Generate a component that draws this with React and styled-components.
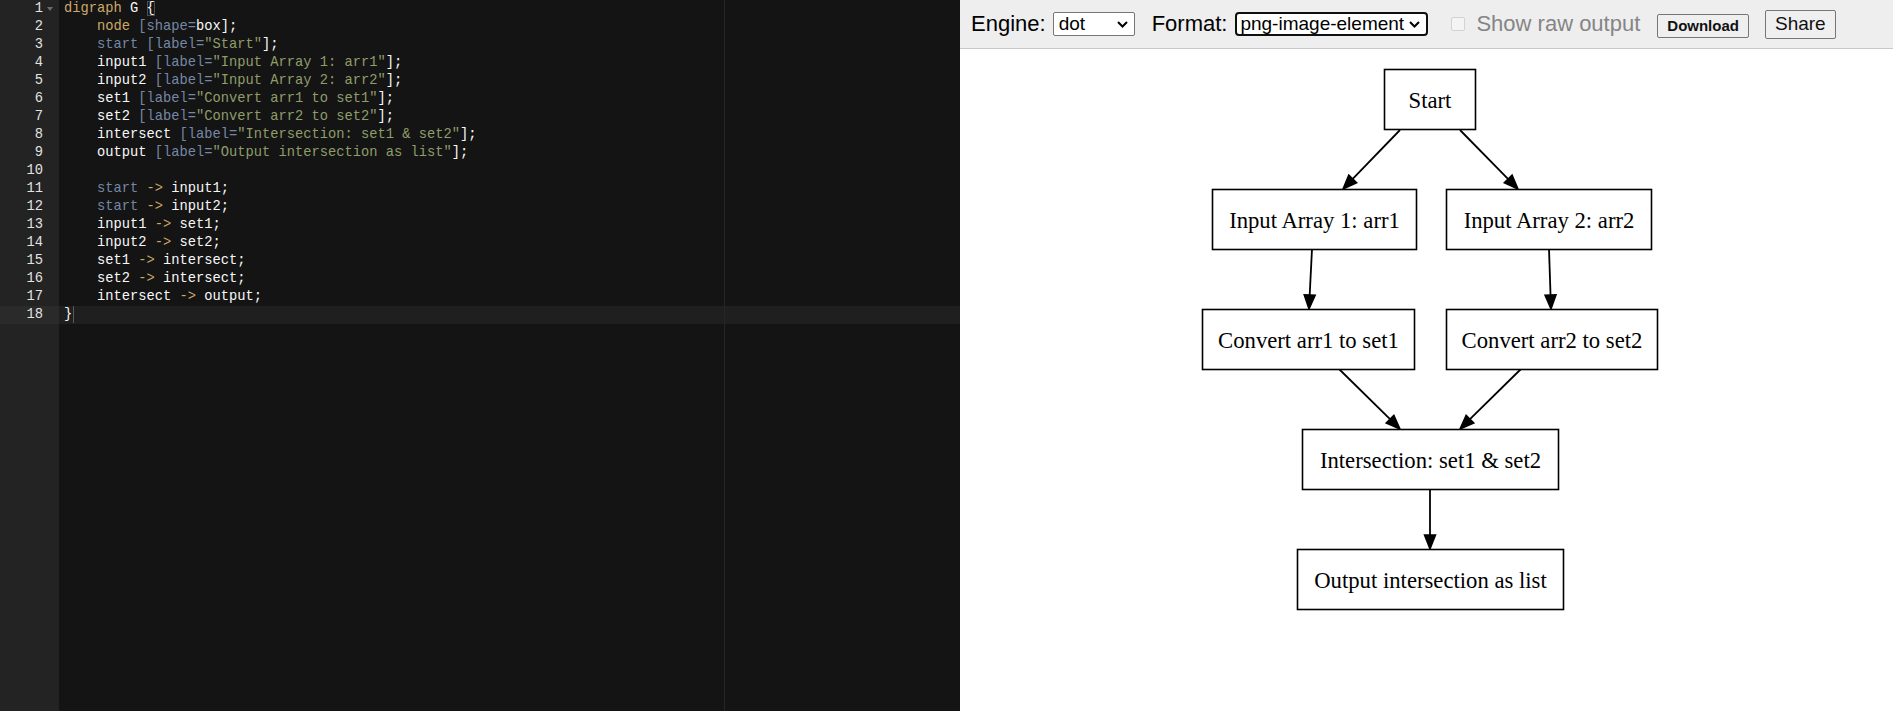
import React from 'react';
import styled, { createGlobalStyle } from 'styled-components';

const GlobalStyle = createGlobalStyle`
  html, body {
    margin: 0;
    padding: 0;
    height: 100%;
    overflow: hidden;
  }
  #root {
    height: 100%;
  }
`;

const Page = styled.div`
  display: flex;
  height: 100vh;
  width: 100vw;
`;

/* ---------- editor ---------- */

const Editor = styled.div`
  width: 960px;
  flex-shrink: 0;
  display: flex;
  background: #141414;
  font-family: 'Liberation Mono', 'DejaVu Sans Mono', monospace;
  font-size: 13.75px;
  line-height: 18px;
  color: #f8f8f8;
`;

const Gutter = styled.div`
  width: 59px;
  flex-shrink: 0;
  background: #232323;
  color: #e2e2e2;
`;

const LineNo = styled.div`
  position: relative;
  height: 18px;
  padding-right: 16px;
  text-align: right;
  background: ${(p) => (p.$active ? '#2a2a2a' : 'transparent')};
`;

const FoldWidget = styled.span`
  position: absolute;
  left: 47px;
  top: 7px;
  width: 0;
  height: 0;
  border-left: 3.5px solid transparent;
  border-right: 3.5px solid transparent;
  border-top: 4px solid #6b6b6b;
`;

const CodeArea = styled.div`
  flex: 1;
  position: relative;
`;

const PrintMargin = styled.div`
  position: absolute;
  top: 0;
  bottom: 0;
  left: 665px;
  width: 1px;
  background: #262626;
`;

const CodeLine = styled.div`
  height: 18px;
  padding-left: 5px;
  white-space: pre;
  background: ${(p) => (p.$active ? '#1f1f1f' : 'transparent')};
`;

const tokenColors = {
  k: '#cda869',
  a: '#7587a6',
  s: '#8f9d6a',
  p: '#f8f8f8',
};

const Tok = styled.span`
  color: ${(p) => tokenColors[p.$kind]};
`;

const Brace = styled.span`
  color: #f8f8f8;
  outline: 1px solid rgba(255, 255, 255, 0.25);
  outline-offset: -1px;
`;

const Cursor = styled.span`
  display: inline-block;
  width: 1px;
  height: 17px;
  margin-left: 1px;
  vertical-align: top;
  background: #5a5a5a;
`;

const attrLine = (name, label) => [
  ['p', '    '],
  name === 'start' ? ['a', name] : ['p', name],
  ['p', ' '],
  ['a', '[label='],
  ['s', `"${label}"`],
  ['p', '];'],
];

const edgeLine = (from, to) => [
  ['p', '    '],
  from === 'start' ? ['a', from] : ['p', from],
  ['k', ' -> '],
  ['p', `${to};`],
];

const codeLines = [
  [['k', 'digraph'], ['p', ' G '], ['brace', '{']],
  [['p', '    '], ['k', 'node'], ['a', ' [shape='], ['p', 'box];']],
  attrLine('start', 'Start'),
  attrLine('input1', 'Input Array 1: arr1'),
  attrLine('input2', 'Input Array 2: arr2'),
  attrLine('set1', 'Convert arr1 to set1'),
  attrLine('set2', 'Convert arr2 to set2'),
  attrLine('intersect', 'Intersection: set1 & set2'),
  attrLine('output', 'Output intersection as list'),
  [],
  edgeLine('start', 'input1'),
  edgeLine('start', 'input2'),
  edgeLine('input1', 'set1'),
  edgeLine('input2', 'set2'),
  edgeLine('set1', 'intersect'),
  edgeLine('set2', 'intersect'),
  edgeLine('intersect', 'output'),
  [['p', '}'], ['cursor', '']],
];

const ACTIVE_LINE = 17;

const CodeEditor = () => (
  <Editor>
    <Gutter>
      {codeLines.map((_, i) => (
        <LineNo key={i} $active={i === ACTIVE_LINE}>
          {i + 1}
          {i === 0 && <FoldWidget />}
        </LineNo>
      ))}
    </Gutter>
    <CodeArea>
      <PrintMargin />
      {codeLines.map((tokens, i) => (
        <CodeLine key={i} $active={i === ACTIVE_LINE}>
          {tokens.map(([kind, text], j) => {
            if (kind === 'brace') return <Brace key={j}>{text}</Brace>;
            if (kind === 'cursor') return <Cursor key={j} />;
            return (
              <Tok key={j} $kind={kind}>
                {text}
              </Tok>
            );
          })}
        </CodeLine>
      ))}
    </CodeArea>
  </Editor>
);

/* ---------- toolbar ---------- */

const Viewer = styled.div`
  flex: 1;
  display: flex;
  flex-direction: column;
  background: #ffffff;
  font-family: 'Liberation Sans', Arial, sans-serif;
`;

const Toolbar = styled.div`
  height: 48px;
  flex-shrink: 0;
  display: flex;
  align-items: center;
  padding-left: 11px;
  background: #eeeeee;
  border-bottom: 1px solid #c9c9c9;
  font-size: 22px;
  color: #000;
`;

const FieldLabel = styled.span`
  margin-right: ${(p) => p.$gap}px;
  color: ${(p) => (p.$disabled ? '#858585' : '#000')};
`;

const SelectWrap = styled.span`
  position: relative;
  display: inline-flex;
  margin-right: ${(p) => p.$gap}px;
`;

const SelectBox = styled.select`
  appearance: none;
  -webkit-appearance: none;
  width: ${(p) => p.$width}px;
  height: 24px;
  box-sizing: border-box;
  padding: 0 0 0 ${(p) => (p.$focused ? 3 : 5)}px;
  font-family: 'Liberation Sans', Arial, sans-serif;
  font-size: 19px;
  line-height: 20px;
  color: #000;
  background: #fff;
  border: ${(p) => (p.$focused ? '2px solid #101010' : '1px solid #767676')};
  border-radius: ${(p) => (p.$focused ? 4 : 2)}px;
  outline: none;
`;

const Chevron = styled.svg`
  position: absolute;
  right: ${(p) => p.$right}px;
  top: 9px;
  pointer-events: none;
`;

const Select = ({ value, width, focused, gap, chevronRight }) => (
  <SelectWrap $gap={gap}>
    <SelectBox $width={width} $focused={focused} defaultValue={value}>
      <option value={value}>{value}</option>
    </SelectBox>
    <Chevron $right={chevronRight} width="11" height="7" viewBox="0 0 11 7">
      <polyline
        points="1,1 5.5,5.5 10,1"
        fill="none"
        stroke="#000"
        strokeWidth="2"
      />
    </Chevron>
  </SelectWrap>
);

const CheckBox = styled.input`
  appearance: none;
  -webkit-appearance: none;
  width: 14px;
  height: 14px;
  margin: 0 11px 0 0;
  box-sizing: border-box;
  border: 1px solid #d2d2d2;
  border-radius: 2px;
  background: #f4f4f4;
`;

const Button = styled.button`
  box-sizing: border-box;
  height: ${(p) => (p.$small ? 24 : 29)}px;
  margin: ${(p) => (p.$small ? '3px 16px 0 0' : '0')};
  padding: 0 9px;
  font-family: 'Liberation Sans', Arial, sans-serif;
  font-size: ${(p) => (p.$small ? 15 : 19)}px;
  font-weight: ${(p) => (p.$small ? 700 : 400)};
  color: #111;
  background: #efefef;
  border: 1px solid #767676;
  border-radius: 2px;
`;

/* ---------- graph ---------- */

const GraphArea = styled.div`
  flex: 1;
  display: flex;
  justify-content: center;
  padding-top: 10px;
`;

const Graph = styled.svg`
  display: block;
  font-family: 'Liberation Serif', 'Times New Roman', serif;
`;

const nodes = [
  { id: 'start', label: 'Start', x: 198, y: 10, w: 91 },
  { id: 'input1', label: 'Input Array 1: arr1', x: 26, y: 130, w: 204 },
  { id: 'input2', label: 'Input Array 2: arr2', x: 260, y: 130, w: 205 },
  { id: 'set1', label: 'Convert arr1 to set1', x: 16, y: 250, w: 212 },
  { id: 'set2', label: 'Convert arr2 to set2', x: 260, y: 250, w: 211 },
  { id: 'inter', label: 'Intersection: set1 & set2', x: 116, y: 370, w: 256 },
  { id: 'output', label: 'Output intersection as list', x: 111, y: 490, w: 266 },
];

const NODE_H = 60;

const edges = [
  [214, 71, 157, 130],
  [274, 71, 332, 130],
  [126, 190, 123, 250],
  [363, 190, 365, 250],
  [153, 310, 214, 370],
  [335, 310, 274, 370],
  [244, 430, 244, 490],
];

const Edge = ({ x1, y1, x2, y2 }) => {
  const len = Math.hypot(x2 - x1, y2 - y1);
  const ux = (x2 - x1) / len;
  const uy = (y2 - y1) / len;
  const head = 14;
  const half = 5.5;
  const bx = x2 - ux * head;
  const by = y2 - uy * head;
  const pts = [
    [x2, y2],
    [bx - uy * half, by + ux * half],
    [bx + uy * half, by - ux * half],
  ]
    .map((p) => p.join(','))
    .join(' ');
  return (
    <g>
      <line x1={x1} y1={y1} x2={bx} y2={by} stroke="#000" strokeWidth="1.8" />
      <polygon points={pts} fill="#000" stroke="#000" strokeWidth="1.5" />
    </g>
  );
};

const FlowGraph = () => (
  <Graph width="481" height="560" viewBox="0 0 481 560">
    {edges.map(([x1, y1, x2, y2], i) => (
      <Edge key={i} x1={x1} y1={y1} x2={x2} y2={y2} />
    ))}
    {nodes.map((n) => (
      <g key={n.id}>
        <rect
          x={n.x + 0.5}
          y={n.y + 0.5}
          width={n.w}
          height={NODE_H}
          fill="#fff"
          stroke="#000"
          strokeWidth="1.6"
        />
        <text
          x={n.x + n.w / 2 + 0.5}
          y={n.y + NODE_H / 2 + 8.8}
          textAnchor="middle"
          fontSize="22.7"
          fill="#000"
        >
          {n.label}
        </text>
      </g>
    ))}
  </Graph>
);

const App = () => (
  <>
    <GlobalStyle />
    <Page>
      <CodeEditor />
      <Viewer>
        <Toolbar>
          <FieldLabel $gap={7}>Engine:</FieldLabel>
          <Select value="dot" width={82} gap={17} chevronRight={7} />
          <FieldLabel $gap={8}>Format:</FieldLabel>
          <Select
            value="png-image-element"
            width={193}
            focused
            gap={23}
            chevronRight={8}
          />
          <CheckBox type="checkbox" disabled />
          <FieldLabel $gap={17} $disabled>
            Show raw output
          </FieldLabel>
          <Button $small>Download</Button>
          <Button>Share</Button>
        </Toolbar>
        <GraphArea>
          <FlowGraph />
        </GraphArea>
      </Viewer>
    </Page>
  </>
);

export default App;
